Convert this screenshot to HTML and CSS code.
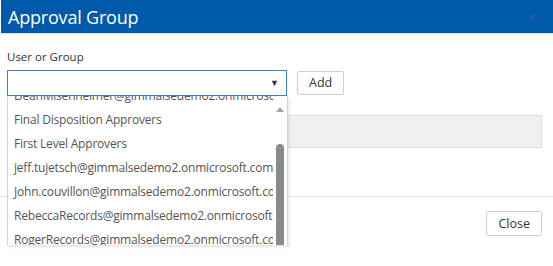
FILE: index.html
```html
<!DOCTYPE html>
<html lang="en">
<head>
    <meta charset="UTF-8">
    <title>Approval Group</title>
    <link rel="stylesheet" href="styles.css">
</head>
<body>
    <div class="dialog">
        <div class="dialog-header">
            <h1 class="dialog-title">Approval Group</h1>
            <span class="close-x">&#x2715;</span>
        </div>

        <div class="dialog-body">
            <label class="field-label">User or Group</label>
            <div class="picker-row">
                <div class="picker">
                    <div class="select-box">
                        <span class="select-arrow">&#9660;</span>
                    </div>
                    <div class="dropdown">
                        <ul class="dropdown-list">
                            <li>DeanMisenheimer@gimmalsedemo2.onmicrosoft.com</li>
                            <li>Final Disposition Approvers</li>
                            <li>First Level Approvers</li>
                            <li>jeff.tujetsch@gimmalsedemo2.onmicrosoft.com</li>
                            <li>John.couvillon@gimmalsedemo2.onmicrosoft.com</li>
                            <li>RebeccaRecords@gimmalsedemo2.onmicrosoft.com</li>
                            <li>RogerRecords@gimmalsedemo2.onmicrosoft.com</li>
                        </ul>
                        <div class="scrollbar">
                            <span class="scroll-up"></span>
                            <span class="scroll-thumb"></span>
                        </div>
                    </div>
                </div>
                <button class="btn">Add</button>
            </div>
            <div class="members-box"></div>
        </div>

        <div class="dialog-footer">
            <button class="btn btn-close">Close</button>
        </div>
    </div>
</body>
</html>
```

FILE: styles.css
```css
body {
    margin: 0;
    padding: 0;
    font-family: 'Open Sans', sans-serif;
    color: #333;
    background: #fff;
}

.dialog {
    width: 553px;
    height: 266px;
    overflow: hidden;
}

.dialog-header {
    background: #005aab;
    height: 33px;
    border-bottom: 1px solid #d6e3f1;
    display: flex;
    align-items: center;
    justify-content: space-between;
    padding: 0 16px 0 7px;
    margin-left: 1px;
}

.dialog-title {
    margin: 0;
    font-size: 18px;
    font-weight: normal;
    color: #fff;
    letter-spacing: -0.2px;
}

.close-x {
    color: #2a64a6;
    font-size: 11px;
}

.dialog-body {
    padding: 15px 11px 0 7px;
}

.field-label {
    display: block;
    font-size: 11.5px;
    line-height: 16px;
    margin-bottom: 5px;
}

.picker-row {
    display: flex;
    align-items: flex-start;
    gap: 10px;
}

.picker {
    position: relative;
    width: 280px;
}

.select-box {
    height: 24px;
    border: 1px solid #3c83cc;
    display: flex;
    align-items: center;
    justify-content: flex-end;
    padding-right: 7px;
}

.select-arrow {
    font-size: 9px;
    line-height: 10px;
    color: #333;
}

.dropdown {
    position: absolute;
    top: 26px;
    left: 0;
    width: 279px;
    height: 149px;
    background: #fff;
    border-left: 1px solid #d5d5d5;
    border-right: 1px solid #d5d5d5;
    box-shadow: 1px 2px 3px rgba(0, 0, 0, 0.12);
    overflow: hidden;
    z-index: 10;
}

.dropdown-list {
    list-style: none;
    margin: -12px 0 0 0;
    padding: 0;
    width: 266px;
    overflow: hidden;
}

.dropdown-list li {
    height: 24px;
    line-height: 24px;
    padding-left: 6px;
    font-size: 12px;
    letter-spacing: -0.2px;
    color: #555;
    white-space: nowrap;
    overflow: hidden;
}

.scrollbar {
    position: absolute;
    top: 0;
    right: 0;
    width: 14px;
    height: 100%;
    background: #fff;
}

.scroll-up {
    position: absolute;
    top: 11px;
    left: 3px;
    border-left: 4px solid transparent;
    border-right: 4px solid transparent;
    border-bottom: 5px solid #a3a3a3;
}

.scroll-thumb {
    position: absolute;
    top: 48px;
    left: 3px;
    width: 8px;
    height: 110px;
    background: #8a8a8a;
    border-radius: 4px;
}

.btn {
    background: #fff;
    border: 1px solid #d0d0d0;
    font-family: inherit;
    font-size: 12.5px;
    line-height: 20px;
    color: #333;
    height: 24px;
    padding: 0 11px;
    border-radius: 2px;
    margin-top: 1px;
}

.members-box {
    margin-top: 19px;
    height: 31px;
    background: #f0f0f0;
    border: 1px solid #dedede;
}

.dialog-footer {
    margin-top: 48px;
    border-top: 1px solid #e6e6e6;
    padding: 14px 11px 0 0;
    display: flex;
    justify-content: flex-end;
}

.btn-close {
    margin-top: 0;
    height: 25px;
}
```
